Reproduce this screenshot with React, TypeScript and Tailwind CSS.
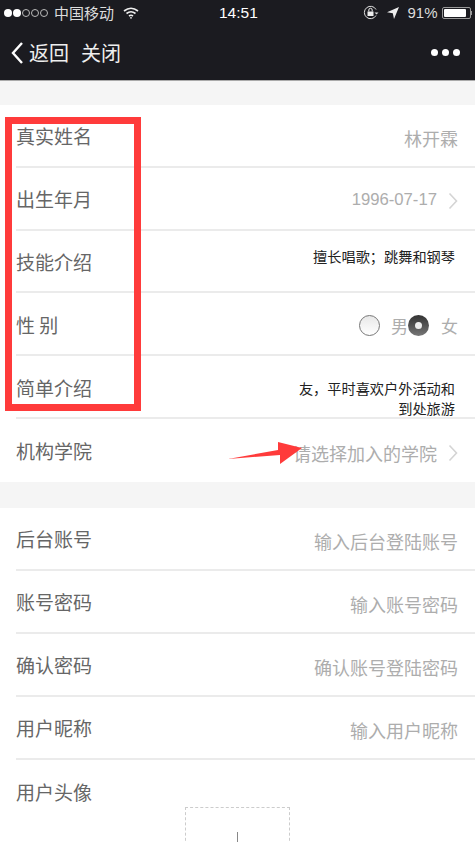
import React from 'react';

const font = { fontFamily: '"Noto Sans CJK SC", "Liberation Sans", sans-serif' };

const Chevron = () => (
  <svg width="10" height="18" viewBox="0 0 10 18" className="ml-[11px] shrink-0" fill="none">
    <path d="M1.5 1.5 L8.5 9 L1.5 16.5" stroke="#d4d4d4" strokeWidth="1.6" />
  </svg>
);

const Row = ({ label, children, last, tall }: { label: string; children?: React.ReactNode; last?: boolean; tall?: boolean }) => (
  <div className={`${tall ? 'h-[63px]' : 'h-[62.8px]'} pt-[1px] flex items-center justify-between pr-[17px] ml-[16px] ${last ? '' : 'border-b-2 border-[#ebebeb]'}`}>
    <span className="text-[19px] leading-none text-[#666] whitespace-pre">{label}</span>
    {children}
  </div>
);

const Hint = ({ children }: { children: React.ReactNode }) => (
  <span className="text-[18px] leading-none text-[#adadad] mt-[4px]">{children}</span>
);

export default function App() {
  return (
    <div style={font} className="relative w-[475px] h-[842px] overflow-hidden bg-white">
      {/* status bar + nav */}
      <div className="h-[81px] bg-[#1b1b20] border-b border-[#aaa] text-white">
        <div className="h-[25px] flex items-center pl-[4px] pr-[3px] text-[15px] text-[#ddd]">
          <div className="flex items-center gap-[1px]">
            <span className="w-[8px] h-[8px] rounded-full bg-white" />
            <span className="w-[8px] h-[8px] rounded-full bg-white" />
            <span className="w-[8px] h-[8px] rounded-full border border-[#bbb]" />
            <span className="w-[8px] h-[8px] rounded-full border border-[#bbb]" />
            <span className="w-[8px] h-[8px] rounded-full border border-[#bbb]" />
          </div>
          <span className="ml-[6px] leading-none">中国移动</span>
          <svg width="16" height="12" viewBox="0 0 16 12" className="ml-[9px]" fill="none" stroke="#eee" strokeWidth="1.6">
            <path d="M1 4 Q8 -1.5 15 4" />
            <path d="M3.5 6.5 Q8 3 12.5 6.5" />
            <path d="M6 9 Q8 7.5 10 9" />
            <circle cx="8" cy="10.8" r="0.9" fill="#eee" stroke="none" />
          </svg>
          <span className="absolute left-[219px] top-[3px] text-[15.5px] leading-[20px] text-white" style={{ fontFamily: '"Liberation Sans", sans-serif' }}>14:51</span>
          <div className="ml-auto flex items-center">
            <svg width="16" height="15" viewBox="0 0 16 15" fill="none">
              <path d="M13 4.5 A6.2 6.2 0 1 0 13 10.5" stroke="#ddd" strokeWidth="1" />
              <path d="M11.5 7.5 h4 l-2 2 z" fill="#ddd" />
              <rect x="4.5" y="6.5" width="6" height="4.5" fill="#eee" />
              <path d="M5.8 6.5 V5 a1.7 1.7 0 0 1 3.4 0 V6.5" stroke="#eee" strokeWidth="1" />
            </svg>
            <svg width="12" height="12" viewBox="0 0 12 12" className="ml-[8px]">
              <path d="M12 0 L0 5.2 L5.8 6.2 L7 12 Z" fill="#eee" />
            </svg>
            <span className="ml-[8px] text-[15px] leading-none text-[#ddd]" style={{ fontFamily: '"Liberation Sans", sans-serif' }}>91%</span>
            <div className="ml-[4px] flex items-center">
              <div className="w-[29px] h-[12px] border border-[#999] rounded-[2px] p-[1px]">
                <div className="h-full w-[91%] bg-white rounded-[1px]" />
              </div>
              <div className="w-[1.5px] h-[4px] bg-[#999]" />
            </div>
          </div>
        </div>
        <div className="h-[55px] flex items-center pl-[10px] pr-[10px]">
          <svg width="14" height="24" viewBox="0 0 14 24" fill="none">
            <path d="M12 2 L3 12 L12 22" stroke="#fff" strokeWidth="2.4" />
          </svg>
          <span className="ml-[5px] text-[20px] leading-none text-[#eee]">返回</span>
          <span className="ml-[12px] text-[20px] leading-none text-[#eee]">关闭</span>
          <div className="ml-auto mr-[5px] flex gap-[4px]">
            <span className="w-[7px] h-[7px] rounded-full bg-white" />
            <span className="w-[7px] h-[7px] rounded-full bg-white" />
            <span className="w-[7px] h-[7px] rounded-full bg-white" />
          </div>
        </div>
      </div>

      <div className="h-[24px] bg-[#f5f5f5]" />

      {/* first section */}
      <div className="bg-white">
        <Row label="真实姓名">
          <Hint>林开霖</Hint>
        </Row>
        <Row label="出生年月">
          <div className="flex items-center mt-[4px]">
            <span className="text-[16.7px] leading-none text-[#adadad]" style={{ fontFamily: '"Liberation Sans", sans-serif' }}>1996-07-17</span>
            <Chevron />
          </div>
        </Row>
        <Row label="技能介绍">
          <span className="text-[14.2px] leading-none text-[#222] mr-[3px] -mt-[11px]">擅长唱歌；跳舞和钢琴</span>
        </Row>
        <Row label="性 别">
          <div className="flex items-center text-[17px] leading-none text-[#adadad] mt-[3px]">
            <span className="w-[21px] h-[21px] rounded-full border border-[#777] bg-gradient-to-b from-[#e8e8e8] to-[#fff]" />
            <span className="ml-[11px]">男</span>
            <span className="w-[21px] h-[21px] rounded-full bg-gradient-to-b from-[#333] to-[#777] flex items-center justify-center">
              <span className="w-[7px] h-[7px] rounded-full bg-[#eee]" />
            </span>
            <span className="ml-[12px]">女</span>
          </div>
        </Row>
        <Row label="简单介绍">
          <div className="text-[14.2px] leading-[20px] text-[#222] text-right mr-[3px] mt-[22px]">
            <div>友，平时喜欢户外活动和</div>
            <div>到处旅游</div>
          </div>
        </Row>
        <Row label="机构学院" last>
          <div className="flex items-center mt-[4px]">
            <span className="text-[18px] leading-none text-[#adadad]">请选择加入的学院</span>
            <Chevron />
          </div>
        </Row>
      </div>

      <div className="h-[26px] bg-[#f5f5f5]" />

      {/* second section */}
      <div className="bg-white">
        <Row tall label="后台账号">
          <Hint>输入后台登陆账号</Hint>
        </Row>
        <Row tall label="账号密码">
          <Hint>输入账号密码</Hint>
        </Row>
        <Row tall label="确认密码">
          <Hint>确认账号登陆密码</Hint>
        </Row>
        <Row tall label="用户昵称">
          <Hint>输入用户昵称</Hint>
        </Row>
        <Row tall label="用户头像" last />
        <div className="-mt-[16px] mx-auto w-[105px] h-[80px] border border-dashed border-[#ccc]">
          <div className="mx-auto mt-[24px] w-px h-[10px] bg-[#888]" />
        </div>
      </div>

      {/* annotations on top of the screenshot */}
      <div className="absolute left-[5px] top-[117px] w-[136px] h-[294px] border-[7px] border-[#ff3b3b]" />
      <svg className="absolute left-[228px] top-[441px]" width="76" height="24" viewBox="0 0 76 24">
        <path d="M0 18 L50 9 L50 1 L74 7 L52 23 L52 14 Z" fill="#ff3b3b" />
      </svg>
    </div>
  );
}
